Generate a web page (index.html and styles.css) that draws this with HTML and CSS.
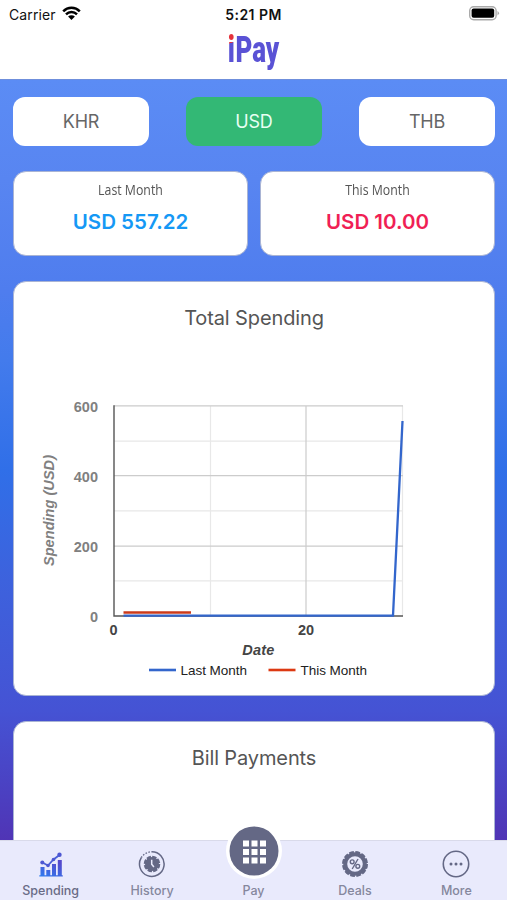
FILE: index.html
```html
<!DOCTYPE html>
<html lang="en">
<head>
    <meta charset="UTF-8">
    <meta name="viewport" content="width=device-width, initial-scale=1.0">
    <title>iPay - Spending</title>
    <link rel="stylesheet" href="styles.css">
</head>
<body>
    <div class="app">
        <header class="header">
            <div class="status-bar">
                <div class="carrier">
                    <span>Carrier</span>
                    <svg width="19" height="15" viewBox="0 0 19 15">
                        <path d="M1.2 5.3A11.7 11.7 0 0 1 17.8 5.3M4 8.3A7.8 7.8 0 0 1 15 8.3" fill="none" stroke="#000" stroke-width="2.5"/>
                        <path d="M6.1 10.6A4.8 4.8 0 0 1 12.9 10.6L9.5 14z" fill="#000"/>
                    </svg>
                </div>
                <div class="time">5:21 PM</div>
                <svg class="battery" width="31" height="15" viewBox="0 0 31 15">
                    <rect x=".7" y=".7" width="26.4" height="13" rx="4" fill="#fff" stroke="#aaa" stroke-width="1.4"/>
                    <rect x="2.6" y="2.6" width="22.6" height="9.2" rx="2" fill="#000"/>
                    <path d="M28.5 5q3 2.2 0 4.4z" fill="#aaa"/>
                </svg>
            </div>
            <div class="logo"><span class="logo-i">i</span>Pay</div>
        </header>

        <main class="content">
            <div class="currencies">
                <button class="currency">KHR</button>
                <button class="currency active">USD</button>
                <button class="currency">THB</button>
            </div>

            <div class="totals">
                <div class="total">
                    <div class="total-label">Last Month</div>
                    <div class="total-value blue">USD 557.22</div>
                </div>
                <div class="total">
                    <div class="total-label">This Month</div>
                    <div class="total-value red">USD 10.00</div>
                </div>
            </div>

            <section class="card spending">
                <h2>Total Spending</h2>
                <svg class="chart" width="480" height="310" viewBox="14 380 480 310">
                    <!-- minor grid -->
                    <path d="M114 441.2H403M114 510.8H403M114 580.8H403M210.5 406V616M402.5 406V616" stroke="#e8e8e8" stroke-width="1.2"/>
                    <!-- major grid -->
                    <path d="M114 405.8H403M114 475.7H403M114 546.2H403M306 406V616" stroke="#ccc" stroke-width="1.2"/>
                    <path d="M114 405.3V616H403" fill="none" stroke="#555" stroke-width="1.4"/>
                    <path d="M123.500 615.6H393L402.500 421" fill="none" stroke="#3366cc" stroke-width="2.3"/>
                    <path d="M123.500 612.500H191" stroke="#cc3a1a" stroke-width="2.6"/>
                    <g class="axis-y">
                        <text x="98" y="411.500">600</text>
                        <text x="98" y="481.500">400</text>
                        <text x="98" y="551.500">200</text>
                        <text x="98" y="621.500">0</text>
                    </g>
                    <g class="axis-x">
                        <text x="113.500" y="635">0</text>
                        <text x="306" y="635">20</text>
                    </g>
                    <text class="axis-title side" transform="translate(54 510.500) rotate(-90)" textLength="111">Spending (USD)</text>
                    <text class="axis-title" x="258.300" y="655" textLength="32">Date</text>
                    <path d="M149 670H176" stroke="#3366cc" stroke-width="2.6"/>
                    <text class="legend" x="180.500" y="675" textLength="66.500">Last Month</text>
                    <path d="M268.500 670H295.500" stroke="#dc3912" stroke-width="2.6"/>
                    <text class="legend" x="300.500" y="675" textLength="66.500">This Month</text>
                </svg>
            </section>

            <section class="card bills">
                <h2>Bill Payments</h2>
            </section>
        </main>

        <nav class="tabs">
            <a class="tab active">
                <svg width="28" height="28" viewBox="0 0 28 28">
                    <defs>
                        <linearGradient id="bars" x1="0" y1="1" x2=".6" y2="0">
                            <stop offset="0" stop-color="#2f7df0"/>
                            <stop offset="1" stop-color="#5549cc"/>
                        </linearGradient>
                    </defs>
                    <path d="M3.500 17h4v9h-4zM9.300 20h4v6h-4zM15 14h4v12h-4zM20.800 10h4v16h-4zM2.300 25.200h23.500v1.400H2.300z" fill="url(#bars)"/>
                    <path d="M5.300 12.500L11 15.500L16.500 9.500L22.500 5" fill="none" stroke="#4a5fd8" stroke-width="1.800"/>
                    <g fill="#4d57d2">
                        <circle cx="5.300" cy="12.500" r="2"/>
                        <circle cx="11" cy="15.500" r="1.800"/>
                        <circle cx="16.500" cy="9.500" r="1.800"/>
                        <circle cx="22.500" cy="4.700" r="2.200"/>
                    </g>
                </svg>
                <span>Spending</span>
            </a>
            <a class="tab">
                <svg width="28" height="28" viewBox="0 0 28 28">
                    <path d="M13.500 1.800A12.300 12.300 0 1 1 3.300 7.700" fill="none" stroke="#646885" stroke-width="1.500"/>
                    <path d="M3.300 7.700A12.300 12.300 0 0 1 13.500 1.800" fill="none" stroke="#646885" stroke-width="1.300" stroke-dasharray="1.500 1.500"/>
                    <circle cx="14" cy="14" r="7" fill="#646885"/>
                    <circle cx="14" cy="14" r="7.200" fill="none" stroke="#646885" stroke-width="2.200" stroke-dasharray="4.400 1.250"/>
                    <path d="M13.700 9.800V14.200L15.900 17" fill="none" stroke="#e9eafc" stroke-width="1.500"/>
                </svg>
                <span>History</span>
            </a>
            <a class="tab pay">
                <svg class="pay-icon" width="58" height="58" viewBox="0 0 58 58">
                    <circle cx="29" cy="29" r="28" fill="#fff"/>
                    <circle cx="29" cy="29" r="24.500" fill="#646885"/>
                    <path d="M18 18.500h6v6h-6zM26.500 18.500h6v6h-6zM35 18.500h6v6h-6zM18 27h6v6h-6zM26.500 27h6v6h-6zM35 27h6v6h-6zM18 35.500h6v6h-6zM26.500 35.500h6v6h-6zM35 35.500h6v6h-6z" fill="#fff"/>
                </svg>
                <span>Pay</span>
            </a>
            <a class="tab">
                <svg width="28" height="28" viewBox="0 0 28 28">
                    <circle cx="14" cy="14" r="9.800" fill="none" stroke="#646885" stroke-width="4"/>
                    <circle cx="14" cy="14" r="11.600" fill="none" stroke="#646885" stroke-width="2.800" stroke-dasharray="4.600 1.470"/>
                    <g fill="none" stroke="#646885" stroke-width="1.400">
                        <circle cx="11.200" cy="11.800" r="1.900"/>
                        <circle cx="16.800" cy="16.300" r="1.900"/>
                        <path d="M17 9L11.200 19"/>
                    </g>
                </svg>
                <span>Deals</span>
            </a>
            <a class="tab">
                <svg width="28" height="28" viewBox="0 0 28 28">
                    <circle cx="14" cy="14" r="12.700" fill="none" stroke="#646885" stroke-width="1.600"/>
                    <g fill="#646885">
                        <circle cx="9" cy="14" r="1.500"/>
                        <circle cx="14" cy="14" r="1.500"/>
                        <circle cx="19" cy="14" r="1.500"/>
                    </g>
                </svg>
                <span>More</span>
            </a>
        </nav>
    </div>
</body>
</html>
```

FILE: styles.css
```css
* {
    box-sizing: border-box;
}
body {
    margin: 0;
    font-family: Inter, "Liberation Sans", sans-serif;
    color: #555;
}
.app {
    display: flex;
    flex-direction: column;
    height: 900px;
    overflow: hidden;
}
.header {
    height: 79px;
    flex: none;
    background: #fff;
}
.status-bar {
    display: grid;
    grid-template-columns: 1fr auto 1fr;
    align-items: center;
    height: 28px;
    padding: 0 7px 0 9px;
    color: #111;
    font-size: 14px;
}
.carrier {
    display: flex;
    align-items: center;
    gap: 6px;
    letter-spacing: .1px;
}
.carrier svg {
    margin-top: -2px;
}
.time {
    margin-left: -2px;
    font-weight: 600;
    letter-spacing: .45px;
}
.battery {
    justify-self: end;
    margin-top: -2px;
}
.logo {
    height: 51px;
    line-height: 43px;
    text-align: center;
    font-family: Roboto, sans-serif;
    font-weight: 900;
    font-size: 37px;
    color: #5a52d5;
    transform: scaleX(.7);
}
.logo-i {
    margin-right: 1px;
    background: linear-gradient(165deg, #e5323c 35%, #5a52d5 36%);
    -webkit-background-clip: text;
    background-clip: text;
    color: transparent;
}
.content {
    flex: 1;
    min-height: 0;
    overflow: hidden;
    padding: 17px 12px 0 13px;
    border-top: 1px solid #6f8fdc;
    background: linear-gradient(#5b8cf5 0, #5885f1 100px, #4f7dee 210px, #437bec 280px, #306fe8 390px, #3d62dd 500px, #4553d4 630px, #4a43c4 700px, #5034b5 761px);
}
.currencies {
    display: flex;
    justify-content: space-between;
}
.currency {
    width: 136px;
    height: 49px;
    border: none;
    border-radius: 12px;
    background: #fff;
    color: #666;
    font-family: inherit;
    font-size: 18px;
    letter-spacing: -.2px;
}
.currency.active {
    background: #33b875;
    color: #e8fff2;
}
.totals {
    display: flex;
    gap: 12px;
    margin-top: 25px;
}
.total {
    flex: 1;
    height: 85px;
    padding-top: 8px;
    border: 1px solid #a9b4d4;
    border-radius: 13px;
    background: #fff;
    text-align: center;
}
.total-label {
    font-family: "Open Sans", sans-serif;
    font-size: 14.5px;
    line-height: 20px;
    transform: scaleX(.85);
}
.total-value {
    margin-top: 8px;
    font-size: 20.5px;
    font-weight: 600;
    line-height: 28px;
}
.blue {
    color: #1598f5;
}
.red {
    color: #f01f55;
}
.card {
    border: 1px solid #a9b4d4;
    border-radius: 13px;
    background: #fff;
}
.card h2 {
    margin: 0;
    padding-top: 22px;
    font-size: 20px;
    font-weight: 400;
    letter-spacing: -.12px;
    line-height: 28px;
    text-align: center;
}
.spending {
    height: 415px;
    margin-top: 25px;
}
.chart {
    display: block;
    margin-top: 48px;
}
.bills {
    height: 300px;
    margin-top: 25px;
}
.chart text {
    font-family: "Liberation Sans", Arial, sans-serif;
    font-size: 14.5px;
    font-weight: bold;
    fill: #444;
    text-anchor: middle;
}
.chart .axis-y text {
    fill: #808080;
    text-anchor: end;
}
.chart .axis-title {
    font-style: italic;
}
.chart .side {
    fill: #808080;
}
.chart .legend {
    font-size: 13.5px;
    font-weight: normal;
    fill: #222;
    text-anchor: start;
}
.tabs {
    display: flex;
    flex: none;
    height: 60px;
    border-top: 1px solid #d9daea;
    background: #e9eafc;
}
.tab {
    display: flex;
    flex: 1;
    flex-direction: column;
    align-items: center;
    padding-top: 9px;
    color: #85879d;
    font-size: 12.5px;
    font-weight: 500;
    line-height: 16px;
}
.tab span {
    margin-top: 5px;
}
.tab.active {
    color: #696c86;
}
.pay-icon {
    margin-top: -28px;
    margin-bottom: -2px;
    position: relative;
}
```
